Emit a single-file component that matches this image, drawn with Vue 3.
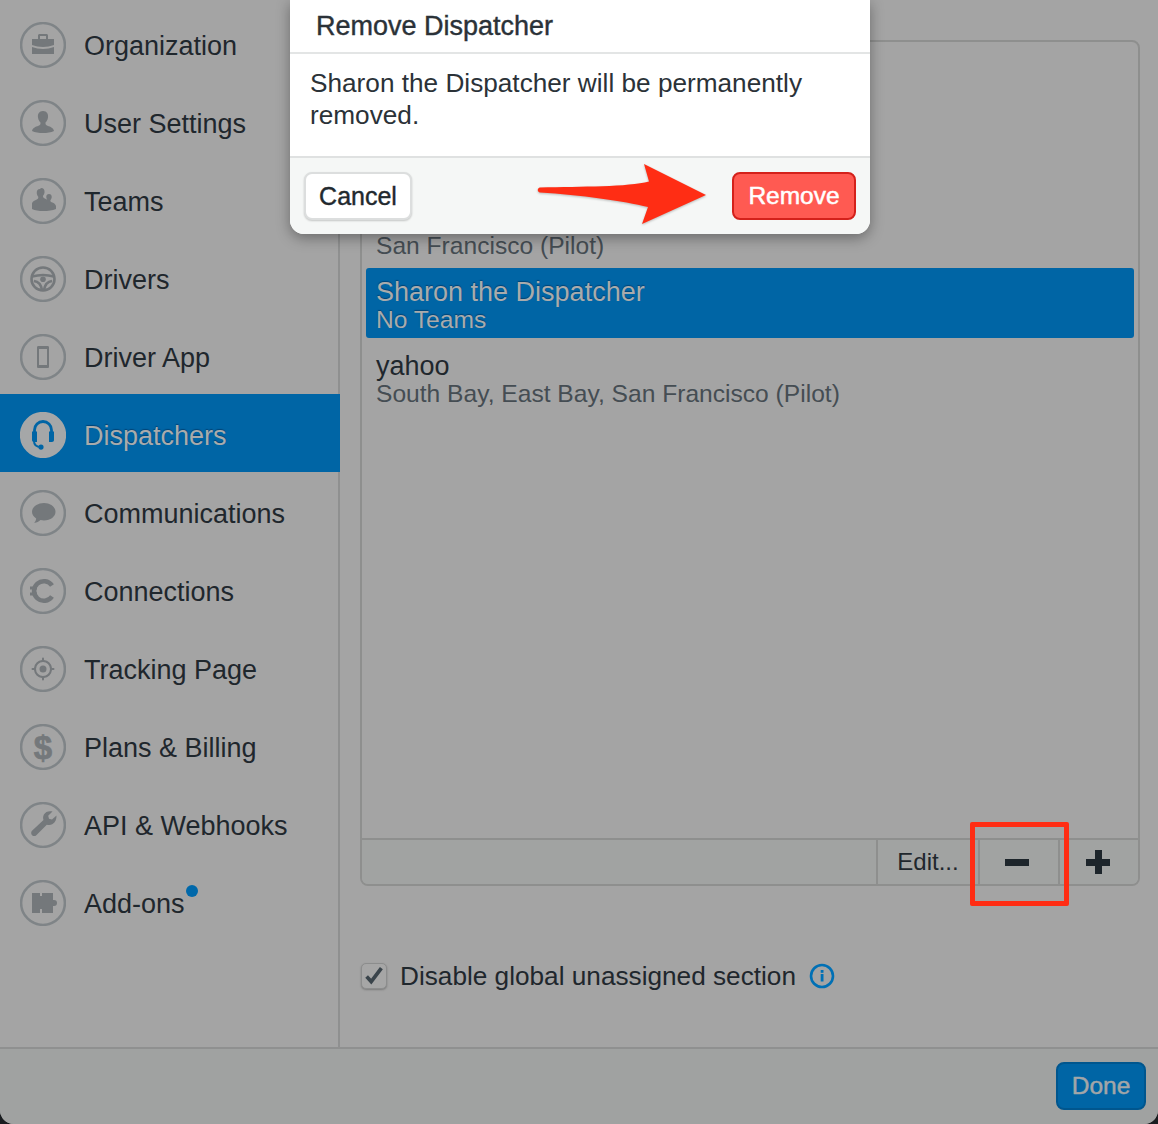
<script setup>
const navItems = [
  { label: 'Organization', shapes: [
    { d: 'M12 17h22v6c-7 2.600-15 2.600-22 0zM12 25c7 2.600 15 2.600 22 0v7H12zM18 17v-3.500c0-.8.700-1.500 1.500-1.500h7c.8 0 1.500.7 1.500 1.500V17h-2v-3h-6v3z' }
  ] },
  { label: 'User Settings', shapes: [
    { d: 'M23 11c-4 0-5.500 3-5 6.500.3 2.500 1.500 4 2.500 5 .2 1.800-.5 2.800-2 3.300-3 1-6 2.400-6.500 5.200 3 1.500 7 2 11 2s8-.5 11-2c-.5-2.800-3.500-4.200-6.500-5.200-1.500-.5-2.200-1.500-2-3.300 1-1 2.200-2.500 2.500-5 .5-3.500-1-6.500-5-6.500z' }
  ] },
  { label: 'Teams', shapes: [
    { d: 'M20 11c-2.500 0-3.500 2-3.200 4.500.2 1.500.9 2.600 1.500 3.300.1 1.500-.3 2.300-1.500 2.800-2 .9-4.300 1.700-4.800 3.700V31c3 1.500 7 2 11.500 2s9-.5 12.500-2v-3c-.5-2-2.500-3-4.300-3.700-1-.4-1.400-1-1.300-2.100.6-.7 1.100-1.600 1.300-2.800.2-2-.7-3.400-2.700-3.400s-2.900 1.400-2.700 3.400c.1 1 .5 1.800 1 2.400-.8-.6-2-1.100-3-1.600-1-.5-1.400-1.300-1.300-2.400.6-.7 1.300-1.800 1.500-3.300.3-2.500-.7-4.500-3.500-4.500z' }
  ] },
  { label: 'Drivers', shapes: [
    { line: true, w: 2.600, d: 'M23 11.500a11.500 11.500 0 1 0 0 23 11.500 11.500 0 0 0 0-23z' },
    { line: true, w: 2.600, d: 'M12 20.500c7-2 15-2 22 0M14 25c4 .5 7 3 8 9M32 25c-4 .5-7 3-8 9' },
    { d: 'M23 20.500a2.800 2.800 0 1 0 0 5.600 2.800 2.800 0 0 0 0-5.600z' }
  ] },
  { label: 'Driver App', shapes: [
    { d: 'M18.500 12h9c1 0 1.500.5 1.500 1.500v19c0 1-.5 1.500-1.500 1.500h-9c-1 0-1.500-.5-1.500-1.500v-19c0-1 .5-1.500 1.500-1.500zm.5 3v16h8V15z' }
  ] },
  { label: 'Dispatchers', active: true, shapes: [
    { line: true, w: 2.800, d: 'M14.500 21v-3a8.500 8.500 0 0 1 17 0v3' },
    { line: true, w: 2, d: 'M14 29c0 4 2.500 6 7 6' },
    { d: 'M12 19.500h5V30h-3c-1.200 0-2-.8-2-2zM29 19.500h5V28c0 1.200-.8 2-2 2h-3z' },
    { d: 'M21 32.500a2.600 2.600 0 1 0 0 5.200 2.600 2.600 0 0 0 0-5.200z' }
  ] },
  { label: 'Communications', shapes: [
    { d: 'M24 13c-6.500 0-12 3.900-12 8.800 0 2.700 1.600 5 4.200 6.600-.2 1.700-1 3.400-2 4.600 2.600-.3 4.700-1.500 6.300-3 1.100.3 2.300.5 3.500.5 6.500 0 11.500-3.900 11.500-8.700S30.500 13 24 13z' }
  ] },
  { label: 'Connections', shapes: [
    { line: true, w: 4.600, d: 'M32 17.500a9.800 9.800 0 1 0 0 11' },
    { line: true, w: 3.200, d: 'M10 20h7M10 26h7' }
  ] },
  { label: 'Tracking Page', shapes: [
    { d: 'M23 11.500a1 1 0 0 1 1 1V14a9 9 0 0 1 8 8h1.500a1 1 0 0 1 0 2H32a9 9 0 0 1-8 8v1.500a1 1 0 0 1-2 0V32a9 9 0 0 1-8-8h-1.500a1 1 0 0 1 0-2H14a9 9 0 0 1 8-8v-1.500a1 1 0 0 1 1-1zm0 4.500a7 7 0 1 0 0 14 7 7 0 0 0 0-14zm0 3.500a3.500 3.500 0 1 1 0 7 3.500 3.500 0 0 1 0-7z' }
  ] },
  { label: 'Plans & Billing', glyph: '$', shapes: [] },
  { label: 'API & Webhooks', shapes: [
    { d: 'M36.500 13.500l-4.500 4-3-.8-.8-3 4.300-4.200c-3.500-1-7 .2-8.600 3-1 1.800-1 3.800-.4 5.400L12 28.800c-1.200 1.200-1 3.300.1 4.400 1.100 1.100 3 1.200 4.200 0l10.500-10.500c2 .7 4 .5 5.800-.7 2.800-1.800 4.100-5 3.900-8.500z' }
  ] },
  { label: 'Add-ons', dot: true, shapes: [
    { d: 'M12 13h8v3h2v-3h11v7h1a3 3 0 0 1 0 6h-1v7H22v-4h-2v4h-8z' }
  ] }
]
</script>

<template>
  <div class="page">
    <div class="main">
      <nav class="sidebar">
        <div v-for="item in navItems" :key="item.label" class="nav-row" :class="{ active: item.active }">
          <svg class="nav-icon" viewBox="0 0 46 46" width="46" height="46">
            <circle class="ring" cx="23" cy="23" r="21.900" />
            <template v-for="s in item.shapes" :key="s.d">
              <path v-if="s.line" class="stroke" :d="s.d" :stroke-width="s.w" />
              <path v-else class="glyph" :d="s.d" fill-rule="evenodd" />
            </template>
            <text v-if="item.glyph" class="dollar" x="23" y="34.500" text-anchor="middle">{{ item.glyph }}</text>
          </svg>
          <span class="nav-label">{{ item.label }}<i v-if="item.dot" class="dot"></i></span>
        </div>
      </nav>

      <section class="content">
        <div class="panel">
          <div class="list">
            <div class="row">
              <div class="name">&nbsp;</div>
              <div class="sub">San Francisco (Pilot)</div>
            </div>
            <div class="row selected">
              <div class="name">Sharon the Dispatcher</div>
              <div class="sub">No Teams</div>
            </div>
            <div class="row">
              <div class="name">yahoo</div>
              <div class="sub">South Bay, East Bay, San Francisco (Pilot)</div>
            </div>
          </div>
          <div class="toolbar">
            <div class="tool edit">Edit...</div>
            <div class="tool minus"><span></span></div>
            <div class="tool plus"><span></span></div>
          </div>
        </div>

        <div class="check-row">
          <span class="checkbox">
            <svg viewBox="0 0 26 26" width="26" height="26">
              <path d="M5 13.500l5 5.500L21 4.500" fill="none" stroke="#3a444b" stroke-width="4" />
            </svg>
          </span>
          <span class="check-label">Disable global unassigned section</span>
          <svg class="info" viewBox="0 0 26 26" width="26" height="26">
            <circle cx="13" cy="13" r="11" fill="none" stroke="#0070b5" stroke-width="2.600" />
            <rect x="11.700" y="11" width="2.800" height="7.500" fill="#0070b5" />
            <rect x="11.700" y="7" width="2.800" height="2.800" fill="#0070b5" />
          </svg>
        </div>
      </section>
    </div>

    <footer class="footer">
      <button class="done">Done</button>
    </footer>

    <div class="modal">
      <div class="modal-head">Remove Dispatcher</div>
      <div class="modal-body">Sharon the Dispatcher will be permanently removed.</div>
      <div class="modal-foot">
        <button class="cancel">Cancel</button>
        <button class="remove">Remove</button>
      </div>
    </div>

    <svg class="arrow" viewBox="0 0 180 70" width="180" height="70">
      <path d="M4 23.500C46 22.500 92 23 113 17.500L108 0l62 31-64 29 6-17C88 37 44 31 4 28.500c-3-.5-3-4.500 0-5z" fill="#ff2d14" />
    </svg>
    <div class="callout"></div>
  </div>
</template>

<style scoped>
.page {
  position: relative;
  width: 1158px;
  height: 1124px;
  display: flex;
  flex-direction: column;
  overflow: hidden;
  border-radius: 0 0 14px 14px;
  background: #a4a4a4;
  font-family: "Liberation Sans", Arial, sans-serif;
  color: #1f272d;
}
.main {
  flex: 1;
  min-height: 0;
  display: flex;
}
.sidebar {
  width: 340px;
  box-sizing: border-box;
  padding-top: 4px;
  border-right: 2px solid #8f9090;
}
.nav-row {
  height: 78px;
  display: flex;
  align-items: center;
  gap: 18px;
  padding: 4px 0 0 20px;
  box-sizing: border-box;
  font-size: 27px;
}
.nav-row.active {
  background: #0065a5;
  margin-right: -2px;
  color: #a9abac;
  text-shadow: 0 -1px 1px rgba(0, 40, 80, .55);
}
.ring {
  fill: none;
  stroke: #7f8487;
  stroke-width: 2.500;
}
.glyph {
  fill: #74787b;
}
.stroke {
  fill: none;
  stroke: #74787b;
}
.dollar {
  fill: #74787b;
  stroke: #74787b;
  stroke-width: .7;
  font: bold 33px "Liberation Sans", sans-serif;
}
.active .ring {
  fill: #a5a7a8;
  stroke: #a5a7a8;
}
.active .glyph {
  fill: #0065a5;
}
.active .stroke {
  stroke: #0065a5;
}
.nav-label {
  position: relative;
  padding-top: 2px;
}
.dot {
  position: absolute;
  right: -13px;
  top: -2px;
  width: 12px;
  height: 12px;
  border-radius: 50%;
  background: #0068aa;
}
.content {
  flex: 1;
  min-width: 0;
  padding: 40px 18px 0 20px;
}
.panel {
  height: 846px;
  box-sizing: border-box;
  border: 2px solid #8e8f8e;
  border-radius: 8px;
  display: flex;
  flex-direction: column;
}
.list {
  flex: 1;
  padding: 148px 4px 0;
}
.row {
  height: 70px;
  box-sizing: border-box;
  padding: 13px 10px 0;
  font-size: 27px;
  border-radius: 3px;
}
.name {
  height: 29px;
  line-height: 31px;
}
.sub {
  height: 29px;
  line-height: 28px;
  font-size: 24.600px;
  color: #454d53;
}
.row.selected {
  margin-top: 8px;
  padding-top: 9px;
  background: #0065a5;
  color: #a9abac;
  text-shadow: 0 -1px 1px rgba(0, 40, 80, .55);
}
.row.selected .sub {
  color: #a9abac;
}
.toolbar {
  height: 46px;
  box-sizing: border-box;
  flex-shrink: 0;
  border-top: 2px solid #8e8f8e;
  display: flex;
  justify-content: flex-end;
  background: #a1a3a2;
  border-radius: 0 0 6px 6px;
}
.tool {
  display: flex;
  align-items: center;
  justify-content: center;
  border-left: 2px solid #8e8f8e;
  font-size: 24px;
  box-sizing: border-box;
}
.edit {
  width: 102px;
}
.minus {
  width: 80px;
  padding-right: 4px;
}
.plus {
  width: 80px;
  padding-right: 2px;
}
.minus span,
.plus span {
  display: block;
  width: 24px;
  height: 7px;
  background: #1d252b;
  position: relative;
}
.plus span::after {
  content: "";
  position: absolute;
  left: 8.500px;
  top: -8.500px;
  width: 7px;
  height: 24px;
  background: #1d252b;
}
.check-row {
  display: flex;
  align-items: center;
  margin-top: 75px;
  height: 30px;
  font-size: 26.200px;
}
.checkbox {
  width: 26px;
  height: 26px;
  margin-left: 1px;
  border: 1px solid #8c8d8d;
  border-radius: 5px;
  box-sizing: border-box;
  background: #a6a6a6;
  box-shadow: 0 1px 2px rgba(0, 0, 0, .25);
  display: flex;
  align-items: center;
  justify-content: center;
}
.check-label {
  margin-left: 13px;
}
.info {
  margin-left: 13px;
}
.footer {
  height: 77px;
  flex-shrink: 0;
  box-sizing: border-box;
  border-top: 2px solid #8f9090;
  background: #a0a2a1;
  display: flex;
  justify-content: flex-end;
  align-items: flex-start;
  padding: 13px 12px 0 0;
}
button {
  font-family: inherit;
  box-sizing: border-box;
  height: 48px;
  border-radius: 8px;
  padding: 0;
}
.done {
  width: 90px;
  background: #0065a5;
  border: 2px solid #00568e;
  color: #a3a6a8;
  font-size: 24.500px;
  -webkit-text-stroke: .5px #a3a6a8;
}
.modal {
  position: absolute;
  left: 290px;
  top: 0;
  width: 580px;
  height: 234px;
  background: #fff;
  border-radius: 0 0 14px 14px;
  box-shadow: 0 4px 14px rgba(0, 0, 0, .35);
  overflow: hidden;
  display: flex;
  flex-direction: column;
  color: #2b3238;
}
.modal-head {
  height: 54px;
  box-sizing: border-box;
  border-bottom: 2px solid #e3e5e5;
  padding: 11px 0 0 26px;
  font-size: 27px;
  line-height: 30px;
  -webkit-text-stroke: .4px #2b3238;
}
.modal-body {
  height: 102px;
  box-sizing: border-box;
  padding: 13px 20px 0;
  font-size: 26.200px;
  line-height: 32px;
}
.modal-foot {
  flex: 1;
  background: #f5f7f6;
  border-top: 2px solid #dfe1e1;
  display: flex;
  justify-content: space-between;
  align-items: flex-start;
  padding: 14px 14px 0;
}
.cancel {
  width: 108px;
  background: #fff;
  border: 2px solid #dcdede;
  color: #22292e;
  font-size: 25px;
  -webkit-text-stroke: .4px #22292e;
  box-shadow: 0 1px 2px rgba(0, 0, 0, .2);
}
.remove {
  width: 124px;
  background: #ff5a52;
  border: 2px solid #d4211b;
  color: #fff;
  font-size: 24.500px;
  -webkit-text-stroke: .5px #fff;
}
.arrow {
  position: absolute;
  left: 536px;
  top: 164px;
  filter: drop-shadow(0 1px 1px rgba(0, 0, 0, .25));
}
.callout {
  position: absolute;
  left: 970px;
  top: 822px;
  width: 99px;
  height: 84px;
  box-sizing: border-box;
  border: 5px solid #ff2d14;
  border-radius: 2px;
}
</style>

<style>
body {
  background: #1a1d20;
}
</style>
